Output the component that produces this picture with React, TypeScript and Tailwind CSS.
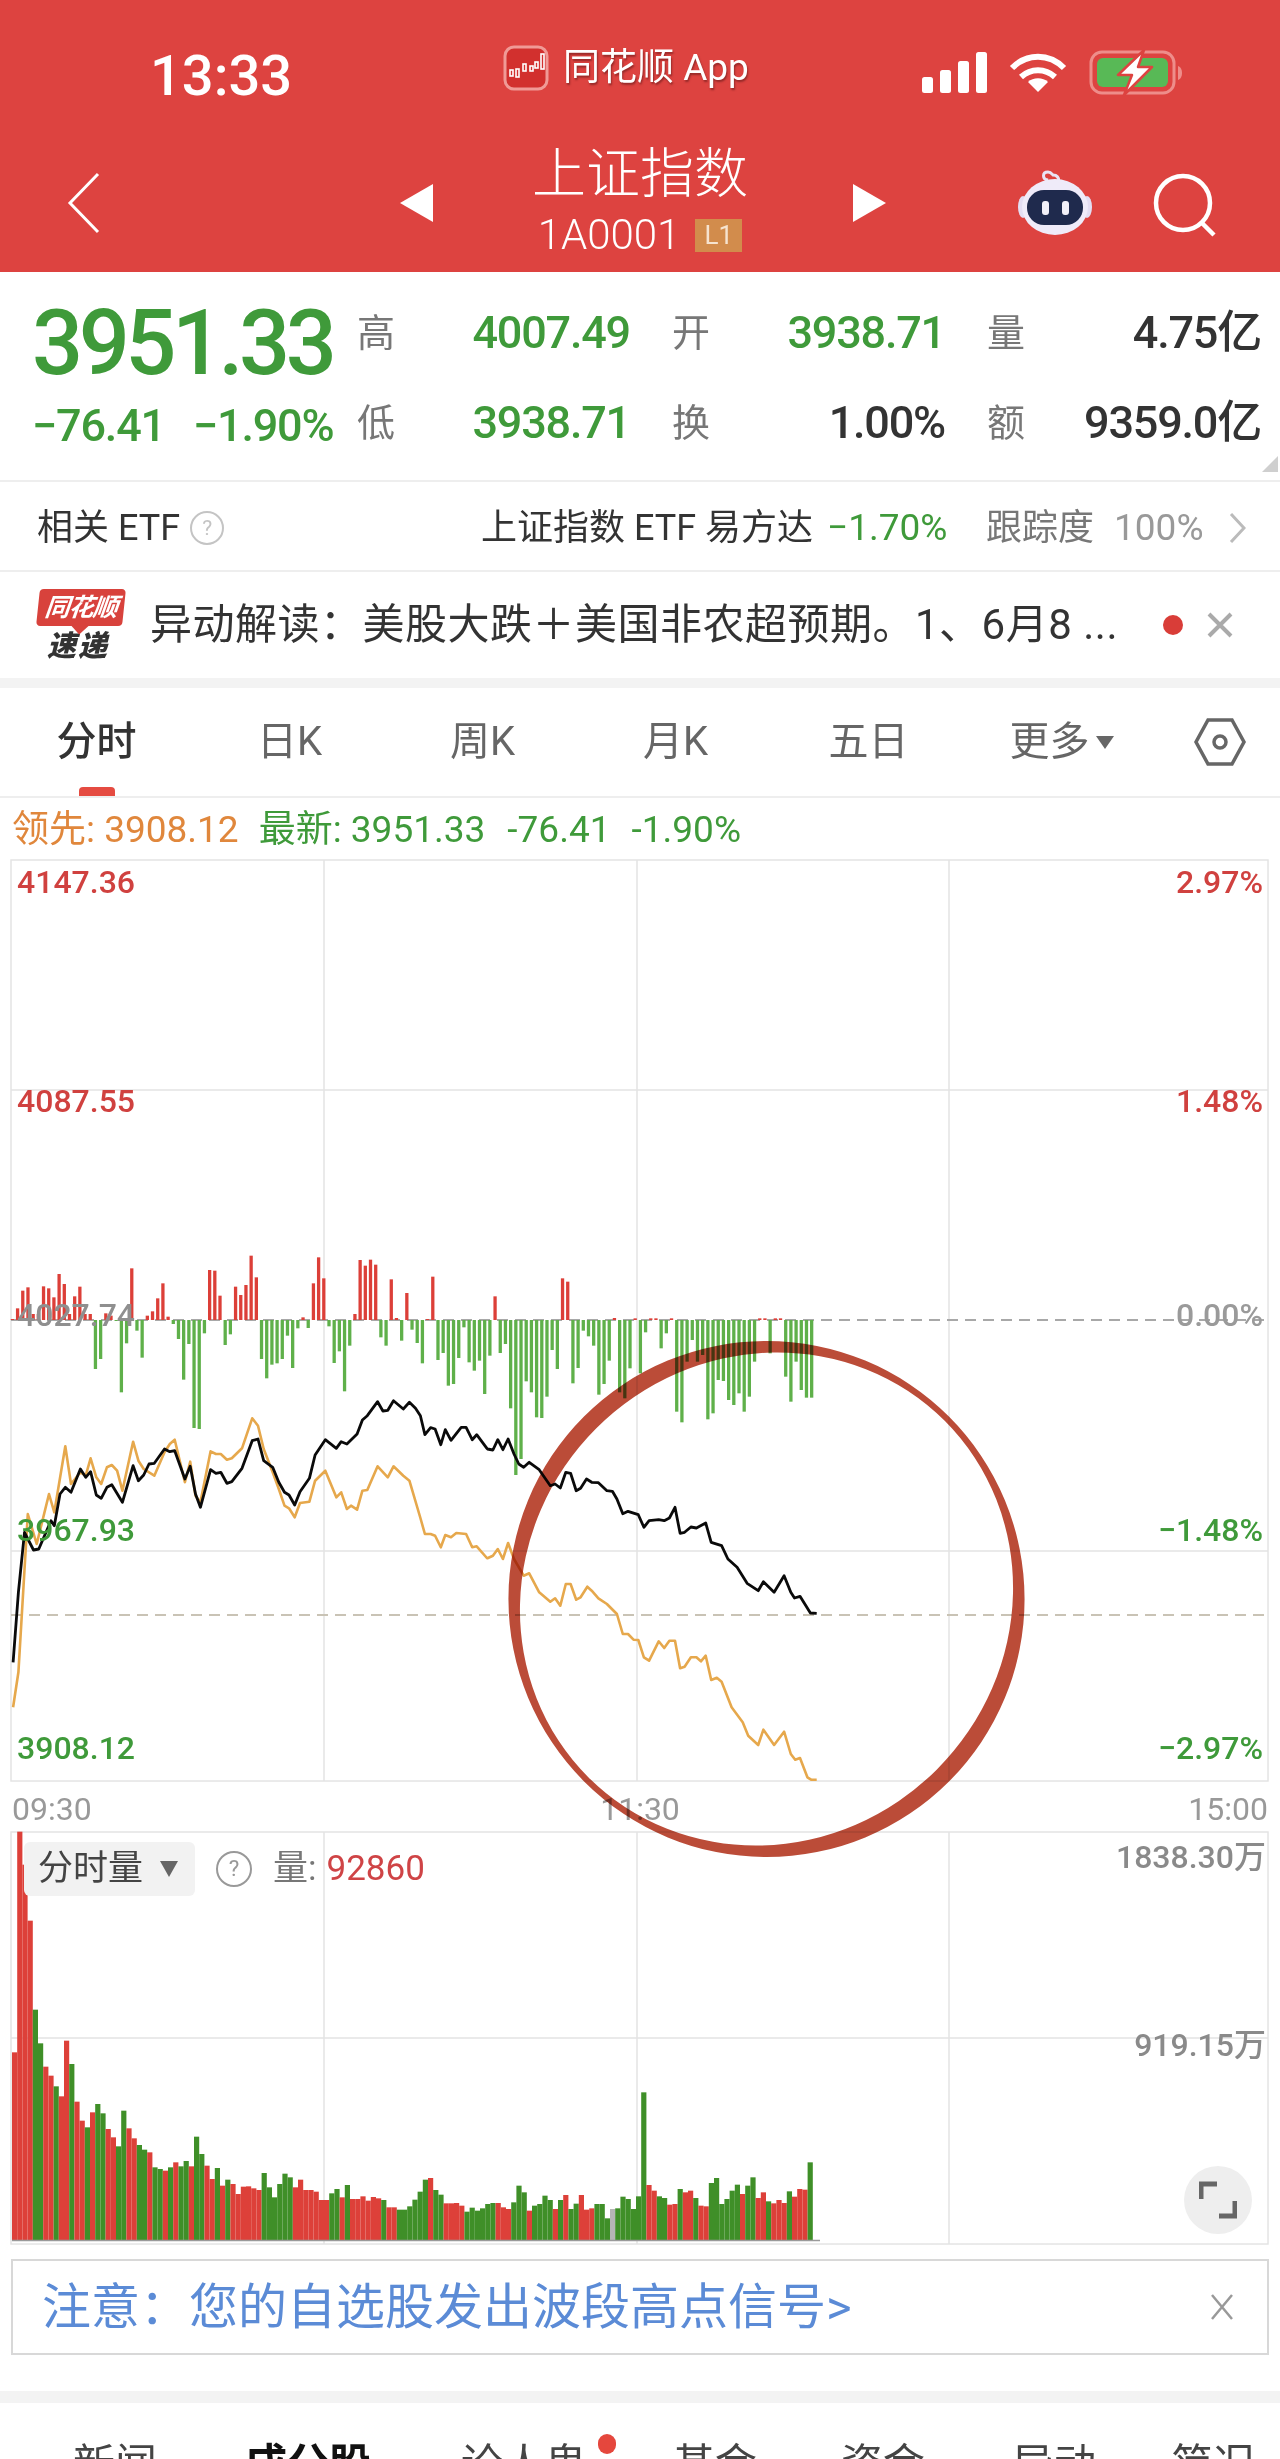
import React from 'react'

// ── Chart data, read off the reference ──────────────────────────────────────

type Pt = [number, number]

// main chart starts at y=860 on the page
const left = (p: Pt): Pt => [p[0] / 2.45, 1220 + p[1] / 3 - 860]
const right = (p: Pt): Pt => [480 + p[0] / 2.703, 1320 + p[1] / 3 - 860]
const toPoints = (pts: Pt[]) => pts.map((p) => `${p[0].toFixed(1)},${p[1].toFixed(1)}`).join(' ')

const BLACK_A: Pt[] = [[32,1330],[45,1120],[60,940],[82,993],[95,990],[125,905],[133,920],[147,825],[160,805],[174,820],[197,750],[210,775],[222,758],[236,828],[248,838],[262,805],[274,797],[300,850],[326,740],[339,785],[352,768],[365,735],[378,733],[403,690],[416,698],[428,695],[453,780],[466,742],[479,825],[491,865],[516,752],[529,763],[541,760],[556,793],[568,788],[593,748],[618,665],[632,660],[646,725],[668,745],[683,790],[697,820],[708,828],[722,858],[735,818],[758,778],[772,708],[797,662],[824,688],[836,668],[850,675],[875,645],[888,603],[900,590],[925,548],[938,576],[950,574],[964,545],[988,570],[1003,550],[1018,568],[1030,590],[1041,647],[1055,626],[1066,630],[1080,677],[1091,632],[1105,664],[1130,625],[1142,625],[1157,662],[1168,647],[1193,688]]
const BLACK_B: Pt[] = [[20,390],[35,393],[48,362],[62,392],[76,360],[92,405],[105,435],[118,445],[133,430],[160,452],[190,500],[203,495],[217,507],[232,460],[245,463],[260,515],[272,508],[288,480],[302,490],[320,491],[343,515],[358,517],[370,540],[386,584],[400,577],[428,587],[443,625],[457,605],[483,602],[498,605],[512,597],[527,565],[541,643],[553,640],[570,624],[585,627],[610,612],[625,670],[653,680],[670,720],[695,745],[722,793],[752,815],[766,788],[795,820],[822,770],[840,820],[850,837],[865,832],[893,882],[910,883]]
const ORANGE_A: Pt[] = [[32,1465],[45,1360],[68,885],[90,975],[120,825],[133,880],[160,682],[174,795],[197,760],[210,770],[222,718],[236,775],[248,795],[262,745],[274,738],[287,755],[300,815],[326,668],[339,725],[352,750],[378,770],[403,700],[416,675],[428,662],[453,790],[466,728],[479,830],[491,850],[516,697],[529,705],[541,705],[556,722],[568,718],[593,688],[618,598],[632,620],[646,690],[668,760],[683,810],[697,860],[708,868],[722,895],[735,852],[758,848],[772,785],[797,755],[824,835],[836,820],[850,870],[860,860],[875,872],[888,815],[900,813],[925,742],[950,775],[964,742],[988,770],[1003,785],[1030,897],[1041,945],[1055,945],[1066,950],[1080,985],[1091,948],[1105,955],[1118,942],[1142,945],[1157,985],[1168,982],[1193,1017]]
const ORANGE_B: Pt[] = [[20,718],[35,710],[48,690],[62,720],[76,672],[92,720],[118,770],[133,763],[160,820],[190,848],[203,838],[217,860],[232,795],[245,795],[260,842],[272,835],[290,803],[302,815],[320,838],[343,855],[370,885],[386,945],[400,945],[415,962],[428,963],[443,1015],[457,1025],[483,967],[498,987],[512,965],[527,965],[541,1048],[553,1043],[570,1015],[585,1015],[597,1027],[610,1010],[625,1083],[640,1076],[653,1088],[680,1165],[710,1210],[725,1250],[752,1278],[766,1232],[795,1278],[822,1238],[840,1305],[852,1322],[865,1317],[885,1375],[895,1382],[910,1382]]

const BLACK_LINE = toPoints([...BLACK_A.map(left), ...BLACK_B.map(right)])
const ORANGE_LINE = toPoints([...ORANGE_A.map(left), ...ORANGE_B.map(right)])

// bar ends around the zero line, in zoomed pixels (above 303 = red, below = green)
const FLOW_ENDS = [300,268,215,205,285,285,202,208,235,165,195,285,232,203,285,285,450,420,283,290,306,520,373,148,335,416,290,277,238,193,293,315,360,482,375,627,630,343,153,155,230,378,346,203,228,198,110,175,420,478,437,433,420,350,447,328,295,327,193,115,178,322,432,397,517,380,285,123,140,122,137,355,380,181,297,365,222,332,372,433,300,173,423,402,500,495,417,325,430,455,425,525,410,232,402,375,568,768,720,487,520,595,597,533,393,450,178,188,493,447,335,352,380,527,495,425,297,520,538,448,298,463,340,298,298,388,343,298,578,610,428,363,428,408,601,583,483,486,543,558,523,578,533,428,298,298,403,298,298,473,548,428,513,536,536]

// top of each volume bar in zoomed pixels, negative = green
const VOLUME_TOPS = [760,98,197,365,-632,-733,803,830,-862,892,725,-795,908,965,-985,940,-915,-943,990,1015,-1042,-935,988,1018,-1038,-1052,1060,-1105,-1110,1115,-1105,1090,-1102,-1086,1102,-1013,-1065,1100,1140,-1107,1160,-1142,1155,1185,1163,1162,1168,1173,-1122,-1165,-1195,-1155,-1124,-1135,1165,1142,1173,1173,1178,1203,1203,-1183,-1170,1195,-1158,1200,1200,1192,1205,1194,1198,-1203,1225,1225,-1232,-1232,-1222,-1202,-1178,-1142,1137,-1173,-1187,1213,1213,1212,1220,-1238,-1226,-1235,-1228,-1215,-1212,1212,1225,1230,-1210,-1160,-1180,1235,-1220,-1215,-1190,-1203,1230,-1203,1188,-1230,-1214,1188,1232,1228,-1215,-1215,-1258,0,-1228,-1193,-1200,-1230,-1192,-880,1158,1175,-1192,-1197,1217,1215,-1170,1180,1175,-1197,1220,1222,-1152,-1137,-1215,-1200,-1175,-1157,1185,-1160,-1135,1197,1180,-1207,1213,1203,1212,-1177,1193,1170,1172,-1090]

const STATS = [
  { label: '高', value: '4007.49', color: 'text-[#3f9a3a]' },
  { label: '开', value: '3938.71', color: 'text-[#3f9a3a]' },
  { label: '量', value: '4.75亿', color: 'text-[#333]' },
  { label: '低', value: '3938.71', color: 'text-[#3f9a3a]' },
  { label: '换', value: '1.00%', color: 'text-[#333]' },
  { label: '额', value: '9359.0亿', color: 'text-[#333]' },
]

const TABS = ['日K', '周K', '月K', '五日']

// ── Icons ───────────────────────────────────────────────────────────────────

function AppIcon() {
  return (
    <svg width="46" height="46" viewBox="0 0 46 46" className="mb-[12px] shrink-0">
      <rect x="2" y="2" width="42" height="42" rx="9" fill="#d2302e" stroke="#f09a96" strokeWidth="3" />
      <g fill="none" stroke="#fff" strokeWidth="1.6">
        <rect x="7" y="25" width="3" height="6" />
        <rect x="13" y="24" width="3" height="8" />
        <rect x="20" y="19" width="3" height="7" />
        <rect x="27" y="21" width="3" height="5" />
        <rect x="32" y="17" width="3" height="6" />
        <rect x="38" y="9" width="3" height="15" />
      </g>
    </svg>
  )
}

function StatusIcons() {
  return (
    <svg width="270" height="50" viewBox="922 52 270 50">
      <g fill="#fff">
        <rect x="922" y="80" width="11" height="16" rx="2.5" />
        <rect x="940" y="73" width="11" height="23" rx="2.5" />
        <rect x="958" y="64" width="11" height="32" rx="2.5" />
        <rect x="976" y="55" width="11" height="41" rx="2.5" />
        <path d="M1038 95l-10-10c5-5 15-5 20 0z" />
      </g>
      <g fill="none" stroke="#fff" strokeWidth="6">
        <path d="M1012 71c15-15 37-15 52 0" />
        <path d="M1021 80c10-9 24-9 34 0" />
      </g>
      <rect x="1091" y="55" width="83" height="41" rx="11" fill="none" stroke="#ee8d8a" strokeWidth="3" />
      <rect x="1097" y="61" width="71" height="29" rx="6" fill="#58b956" />
      <path d="M1178 69c3 1 4 4 4 7s-1 6-4 7z" fill="#ee8d8a" />
      <path d="M1144 53L1118 78h14l-8 20 28-28h-14l6-17z" fill="#fff" stroke="#dd4340" strokeWidth="2.5" strokeLinejoin="round" />
    </svg>
  )
}

function RobotIcon() {
  return (
    <svg width="76" height="70" viewBox="0 0 76 70">
      <path d="M31 12c-6-1-6-8 0-8 3 0 4 2 5 3 3 0 6 1 6 7" fill="none" stroke="#e9e4f5" strokeWidth="3" />
      <ellipse cx="6" cy="39" rx="5" ry="11" fill="#e3ddf2" />
      <ellipse cx="70" cy="39" rx="5" ry="11" fill="#e3ddf2" />
      <ellipse cx="38" cy="39" rx="33" ry="28" fill="#efebf9" />
      <rect x="10" y="22" width="56" height="35" rx="17" fill="#1f2a4d" />
      <rect x="25" y="33" width="7" height="14" rx="3" fill="#f2f0f8" />
      <rect x="45" y="33" width="7" height="14" rx="3" fill="#f2f0f8" />
    </svg>
  )
}

function HelpCircle({ size, className }: { size: number; className: string }) {
  return (
    <span
      className={`flex shrink-0 items-center justify-center rounded-full border-2 border-current ${className}`}
      style={{ width: size, height: size, fontSize: size * 0.62 }}
    >
      ?
    </span>
  )
}

// ── Sections ────────────────────────────────────────────────────────────────

function Header() {
  return (
    <header className="h-[272px] shrink-0 bg-[#dd4340] text-white">
      <div className="flex h-[140px] items-center pt-[8px]">
        <div className="w-[503px] pl-[150px] pt-[4px] text-[56px] font-medium leading-none">13:33</div>
        <AppIcon />
        <div className="ml-[14px] w-[359px] pb-[14px] text-[37px] leading-none [text-shadow:1px_2px_2px_rgba(90,20,20,0.55)]">
          同花顺 App
        </div>
        <StatusIcons />
      </div>
      <div className="flex h-[132px]">
        <div className="flex w-[400px] items-center pb-[6px] pl-[66px]">
          <svg width="34" height="62" viewBox="0 0 34 62" fill="none" stroke="#fff" strokeWidth="3">
            <path d="M32 2L4 31l28 29" />
          </svg>
        </div>
        <div className="flex w-[33px] items-center pb-[6px]">
          <svg width="33" height="38" viewBox="0 0 33 38"><path d="M33 0v38L0 19z" fill="#fff" /></svg>
        </div>
        <div className="flex w-[420px] flex-col items-center pr-[6px] pt-[4px]">
          <div className="text-[54px] font-light leading-[62px]">上证指数</div>
          <div className="mt-[11px] flex items-center gap-[15px]">
            <span className="text-[42px] font-light leading-[36px]">1A0001</span>
            <span className="flex h-[33px] w-[47px] items-center justify-center bg-[#d28c4c] text-[26px] leading-none text-[#f6e3cf]">
              L1
            </span>
          </div>
        </div>
        <div className="flex w-[33px] items-center pb-[6px]">
          <svg width="33" height="38" viewBox="0 0 33 38"><path d="M0 0v38l33-19z" fill="#fff" /></svg>
        </div>
        <div className="ml-[131px] flex items-start pt-[28px]">
          <RobotIcon />
        </div>
        <div className="ml-[59px] flex items-start pt-[33px]">
          <svg width="66" height="66" viewBox="0 0 66 66" fill="none" stroke="#fff" strokeWidth="4.5">
            <circle cx="31" cy="30" r="27" />
            <path d="M50 50l12 12" />
          </svg>
        </div>
      </div>
    </header>
  )
}

function Quote() {
  return (
    <section className="relative flex h-[210px] shrink-0 border-b-2 border-[#eeeeee] text-[#3f9a3a]">
      <div className="w-[357px] pl-[32px]">
        <div className="mt-[27px] text-[90px] font-medium leading-[90px] tracking-[-4.5px]">3951.33</div>
        <div className="mt-[12px] flex gap-[28px] text-[45px] font-medium leading-[50px] tracking-[-1.2px]">
          <span>−76.41</span>
          <span>−1.90%</span>
        </div>
      </div>
      <div className="mt-[16px] grid h-[180px] grid-cols-[273px_273px_274px] grid-rows-2 gap-x-[42px]">
        {STATS.map((s) => (
          <div key={s.label} className="flex items-center justify-between">
            <span className="text-[38px] text-[#777]">{s.label}</span>
            <span className={`text-[45px] font-medium tracking-[-1.2px] ${s.color}`}>{s.value}</span>
          </div>
        ))}
      </div>
      <svg width="16" height="16" viewBox="0 0 16 16" className="absolute bottom-[8px] right-[2px]">
        <path d="M16 0v16H0z" fill="#cfcfcf" />
      </svg>
    </section>
  )
}

function EtfRow() {
  return (
    <section className="flex h-[90px] shrink-0 items-center justify-between border-b-2 border-[#eeeeee] pl-[37px] pr-[34px] pt-[4px] text-[36px] text-[#333]">
      <div className="flex items-center gap-[10px]">
        <span>相关 ETF</span>
        <HelpCircle size={34} className="text-[#c4c4c4]" />
      </div>
      <div className="flex items-center">
        <span className="w-[346px]">上证指数 ETF 易方达</span>
        <span className="w-[159px] text-[37px] text-[#3f9a3a]">−1.70%</span>
        <span className="w-[128px] text-[#777]">跟踪度</span>
        <span className="w-[115px] text-[37px] text-[#999]">100%</span>
        <svg width="17" height="30" viewBox="0 0 17 30" fill="none" stroke="#bbb" strokeWidth="3">
          <path d="M2 1l13 14L2 29" />
        </svg>
      </div>
    </section>
  )
}

function NewsRow() {
  return (
    <section className="flex h-[106px] shrink-0 items-center pl-[38px]">
      <div className="w-[112px] shrink-0">
        <div className="relative flex h-[37px] w-[86px] -skew-x-6 items-center justify-center rounded-[4px] bg-[#d8423c] text-[25px] font-bold italic leading-none text-white">
          <span className="tracking-[-1px]">同花顺</span>
          <span className="absolute bottom-[-6px] left-[38px] h-[12px] w-[12px] rotate-45 bg-[#d8423c]" />
        </div>
        <div className="mt-[5px] pl-[9px] text-[29px] font-black italic leading-[30px] tracking-[2px] text-[#333]">速递</div>
      </div>
      <div className="w-[1013px] text-[42px] leading-none tracking-[0.5px] text-[#333]">异动解读：美股大跌＋美国非农超预期。1、6月8 ...</div>
      <span className="h-[20px] w-[20px] rounded-full bg-[#d93d38]" />
      <svg width="26" height="26" viewBox="0 0 26 26" stroke="#aaa" strokeWidth="4" className="ml-[24px]">
        <path d="M2 2l22 22M24 2L2 24" />
      </svg>
    </section>
  )
}

function PeriodTabs() {
  return (
    <section className="flex h-[120px] shrink-0 items-center border-b-2 border-t-[10px] border-b-[#eeeeee] border-t-[#f3f3f3] text-[40px] text-[#666]">
      <div className="relative flex h-full w-[193px] items-center justify-center font-medium text-[#333]">
        分时
        <span className="absolute bottom-0 left-[79px] h-[9px] w-[36px] rounded-t-[4px] bg-[#e54b41]" />
      </div>
      {TABS.map((t) => (
        <div key={t} className="flex w-[193px] items-center justify-center">{t}</div>
      ))}
      <div className="flex w-[193px] items-center justify-center gap-[6px]">
        更多
        <svg width="18" height="14" viewBox="0 0 18 14"><path d="M0 1h18L9 14z" fill="#666" /></svg>
      </div>
      <svg width="52" height="48" viewBox="0 0 52 48" fill="none" stroke="#666" strokeWidth="3.5" className="ml-[36px]">
        <path d="M14 2h24l12 22-12 22H14L2 24z" />
        <circle cx="26" cy="24" r="6" />
      </svg>
    </section>
  )
}

function Legend() {
  return (
    <div className="flex h-[61px] shrink-0 items-center pl-[12px] pt-[2px] text-[37px] leading-none">
      <span className="text-[#e0873c]">领先: 3908.12</span>
      <span className="ml-[20px] text-[#3f9a3a]">最新: 3951.33</span>
      <span className="ml-[22px] text-[#3f9a3a]">-76.41</span>
      <span className="ml-[21px] text-[#3f9a3a]">-1.90%</span>
    </div>
  )
}

function MainChart() {
  return (
    <div className="relative h-[923px] shrink-0 text-[32px] font-medium leading-[40px]">
      <svg viewBox="0 0 1280 923" className="block h-[923px] w-[1280px]">
        <g stroke="#e4e4e4" strokeWidth="1.5" fill="none">
          <rect x="11" y="1" width="1257" height="921" />
          <path d="M324 1v921M637 1v921M949 1v921M11 231h1257M11 692h1257" />
        </g>
        <path d="M11 756h1257" stroke="#c9c3b5" strokeWidth="2" strokeDasharray="11 7" />
        <path d="M11 461h1257" stroke="#a8a8a8" strokeWidth="2" strokeDasharray="11 7" />
        {FLOW_ENDS.map((end, i) => {
          const h = (end - 303) / 3
          const x = 12.4 + i * 5.19
          return (
            <line
              key={i}
              x1={x}
              x2={x}
              y1={461}
              y2={461 + h}
              stroke={h < 0 ? '#dc3f38' : '#5fb04a'}
              strokeWidth="3.3"
            />
          )
        })}
        <polyline points={ORANGE_LINE} fill="none" stroke="#e6a84c" strokeWidth="2.6" strokeLinejoin="round" />
        <polyline points={BLACK_LINE} fill="none" stroke="#0a0a0a" strokeWidth="2.8" strokeLinejoin="round" />
      </svg>
      <div className="absolute inset-0 flex justify-between pb-[14px] pl-[17px] pr-[17px] pt-[3px]">
        <div className="flex flex-col justify-between">
          <span className="text-[#d0413f]">4147.36</span>
          <span className="text-[#d0413f]">4087.55</span>
          <span className="mt-[-4px] text-[#8f8f8f]">4027.74</span>
          <span className="mt-[-4px] text-[#3f9a3a]">3967.93</span>
          <span className="text-[#3f9a3a]">3908.12</span>
        </div>
        <div className="flex flex-col items-end justify-between">
          <span className="text-[#d0413f]">2.97%</span>
          <span className="text-[#d0413f]">1.48%</span>
          <span className="mt-[-4px] text-[#9a9a9a]">0.00%</span>
          <span className="mt-[-4px] text-[#3f9a3a]">−1.48%</span>
          <span className="text-[#3f9a3a]">−2.97%</span>
        </div>
      </div>
    </div>
  )
}

function VolumeChart() {
  return (
    <div className="relative h-[414px] shrink-0">
      <svg viewBox="0 0 1280 414" className="block h-[414px] w-[1280px]">
        <g stroke="#e4e4e4" strokeWidth="1.5" fill="none">
          <rect x="11" y="1" width="1257" height="412" />
          <path d="M324 1v412M637 1v412M949 1v412M11 207h1257" />
        </g>
        {VOLUME_TOPS.map((top, i) => {
          const y = 1800 + Math.abs(top) / 3 - 1832
          const x = 12 + i * 5.2
          const fill = top === 0 ? '#b5b5b5' : top > 0 ? '#dd4039' : '#3f8f28'
          return <rect key={i} x={x} y={top === 0 ? 378 : y} width="5.2" height={409 - (top === 0 ? 378 : y)} fill={fill} />
        })}
        <path d="M12 409.5h808" stroke="#9a9a9a" strokeWidth="1.5" />
      </svg>
      <div className="absolute left-[24px] top-[11px] flex items-center">
        <div className="flex h-[54px] w-[171px] items-center gap-[17px] rounded-[6px] bg-[#f2f2f2] pl-[14px] text-[35px] text-[#444]">
          分时量
          <svg width="18" height="16" viewBox="0 0 18 16"><path d="M0 0h18L9 16z" fill="#666" /></svg>
        </div>
        <HelpCircle size={36} className="ml-[21px] text-[#999]" />
        <span className="ml-[21px] text-[35px] text-[#777]">量:</span>
        <span className="ml-[10px] text-[35px] text-[#cf4446]">92860</span>
      </div>
      <div className="absolute right-[14px] top-[4px] flex h-[232px] flex-col items-end justify-between text-[32px] font-medium leading-[44px] text-[#8a8a8a]">
        <span>1838.30万</span>
        <span>919.15万</span>
      </div>
      <div className="absolute left-[1184px] top-[335px] flex h-[68px] w-[68px] items-center justify-center rounded-full bg-[#eeeeee]">
        <svg width="38" height="38" viewBox="0 0 38 38" fill="none" stroke="#666" strokeWidth="5">
          <path d="M2 18V3h16M36 20v15H20" />
        </svg>
      </div>
    </div>
  )
}

function AlertBox() {
  return (
    <div className="mx-[11px] mt-[14px] flex h-[96px] shrink-0 items-center justify-between border-2 border-[#d8d8d8] pl-[29px] pr-[33px]">
      <span className="text-[49px] leading-none text-[#5b8bd6]">注意：您的自选股发出波段高点信号&gt;</span>
      <svg width="24" height="26" viewBox="0 0 24 26" stroke="#999" strokeWidth="2.5">
        <path d="M2 1l20 24M22 1L2 25" />
      </svg>
    </div>
  )
}

function BottomTabs() {
  return (
    <div className="relative mt-[36px] flex h-[136px] shrink-0 items-center border-t-[12px] border-[#f3f3f3] text-[42px] leading-none text-[#444]">
      <span className="absolute left-[73px]">新闻</span>
      <span className="absolute left-[245px] font-bold text-[#111]">成分股</span>
      <span className="absolute left-[461px]">论人鬼</span>
      <span className="absolute left-[673px]">基金</span>
      <span className="absolute left-[841px]">资金</span>
      <span className="absolute left-[1012px]">异动</span>
      <span className="absolute left-[1171px]">简况</span>
      <span className="absolute left-[598px] top-[31px] h-[20px] w-[18px] rounded-full bg-[#e5473d]" />
    </div>
  )
}

function HandDrawnRing() {
  // outer circle with a tilted inner ellipse, so the stroke thins towards two corners
  return (
    <svg
      viewBox="0 0 1280 1386"
      className="pointer-events-none absolute left-0 top-0 h-[1386px] w-[1280px] mix-blend-multiply"
    >
      <path
        fillRule="evenodd"
        fill="#bb4c38"
        d="M508.5 740a258 258 0 1 0 516 0a258 258 0 1 0-516 0z M514.5 740a252 241 0 1 0 504 0a252 241 0 1 0-504 0z"
        transform="rotate(-45 766.5 740)"
      />
    </svg>
  )
}

// ── Page ────────────────────────────────────────────────────────────────────

export default function App() {
  return (
    <div className="flex h-[2459px] w-[1280px] flex-col overflow-hidden bg-white [font-family:Roboto,'Noto_Sans_CJK_SC',sans-serif]">
      <Header />
      <Quote />
      <EtfRow />
      <NewsRow />
      <PeriodTabs />
      <Legend />
      <div className="relative shrink-0">
        <MainChart />
        <div className="flex h-[49px] items-center justify-between px-[12px] pt-[4px] text-[32px] leading-none text-[#999]">
          <span>09:30</span>
          <span>11:30</span>
          <span>15:00</span>
        </div>
        <VolumeChart />
        <HandDrawnRing />
      </div>
      <AlertBox />
      <BottomTabs />
    </div>
  )
}
